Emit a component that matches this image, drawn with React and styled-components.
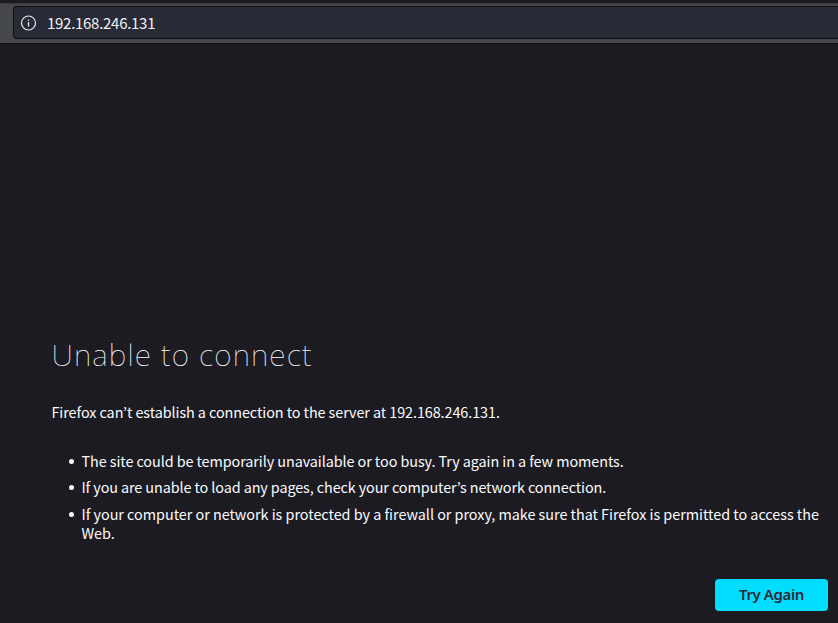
import React from "react";
import styled, { createGlobalStyle } from "styled-components";

const bodyFont = '"Noto Sans CJK KR", "Noto Sans", sans-serif';

const GlobalStyle = createGlobalStyle`
  * { box-sizing: border-box; }
  body { margin: 0; background: #1c1b22; font-family: ${bodyFont}; }
`;

const Page = styled.div`
  height: 623px;
  display: flex;
  flex-direction: column;
  overflow: hidden;
  background: #1c1b22;
  color: #fbfbfe;
`;

const Toolbar = styled.header`
  flex: none;
  height: 44px;
  padding: 3px 0 4px 13px;
  background: #45474b;
  border-top: 3px solid #1b1b20;
  border-bottom: 1px solid #0c0c12;
  box-shadow: inset 0 1px #38393d;
`;

const AddressBar = styled.div`
  height: 33px;
  display: flex;
  align-items: center;
  gap: 10px;
  padding-left: 7px;
  background: #282a36;
  border: 1px solid #0d0e14;
  border-right: 0;
  border-radius: 4px 0 0 4px;
  font-size: 15px;
  letter-spacing: ${(p) => p.$tracking};
  color: #f0f0f2;
`;

const Message = styled.main`
  flex: 1;
  display: flex;
  flex-direction: column;
  padding: 287px 10px 12px 51.5px;
  font-size: 14.4px;
  line-height: 19px;
`;

const Title = styled.h1`
  margin: 0;
  font-family: "Noto Sans", sans-serif;
  font-size: 30px;
  line-height: 48px;
  font-weight: 100;
  white-space: nowrap;
  letter-spacing: ${(p) => p.$tracking};
`;

const Text = styled.p`
  margin: 23px 0 0;
  white-space: nowrap;
  letter-spacing: ${(p) => p.$tracking};
`;

const Hints = styled.ul`
  margin: 30px 0 0;
  padding: 0 0 0 17px;
  list-style: none;
`;

const Hint = styled.li`
  display: flex;
  gap: 8px;
  margin-bottom: ${(p) => p.$gap || "7px"};
  white-space: nowrap;
  letter-spacing: ${(p) => p.$tracking};

  &::before {
    content: "";
    flex: none;
    width: 5px;
    height: 5px;
    margin-top: 8px;
    border-radius: 50%;
    background: currentColor;
  }
`;

const RetryButton = styled.button`
  align-self: flex-end;
  margin-top: auto;
  width: 113px;
  height: 32px;
  padding: 0 0 2px;
  border: 0;
  border-radius: 4px;
  background: #00ddff;
  color: #2b2a33;
  font: 600 15px "Noto Sans", sans-serif;
  letter-spacing: -0.4px;
`;

const InfoIcon = () => (
  <svg width="16" height="16" viewBox="0 0 16 16" fill="none" stroke="#e8e8ec">
    <circle cx="7.5" cy="8" r="7" strokeWidth="1.2" />
    <path d="M7.5 7v4.5M7.5 4.5v1.2" strokeWidth="1.3" />
  </svg>
);

export default function App() {
  return (
    <Page>
      <GlobalStyle />
      <Toolbar>
        <AddressBar $tracking="-0.28px">
          <InfoIcon />
          <span>192.168.246.131</span>
        </AddressBar>
      </Toolbar>
      <Message>
        <Title $tracking="1.13px">Unable to connect</Title>
        <Text $tracking="-0.08px">Firefox can’t establish a connection to the server at 192.168.246.131.</Text>
        <Hints>
          <Hint $tracking="-0.08px">The site could be temporarily unavailable or too busy. Try again in a few moments.</Hint>
          <Hint $tracking="-0.1px" $gap="8px">If you are unable to load any pages, check your computer’s network connection.</Hint>
          <Hint $tracking="-0.03px">
            <span>
              If your computer or network is protected by a firewall or proxy, make sure that Firefox is permitted to access the
              <br />
              Web.
            </span>
          </Hint>
        </Hints>
        <RetryButton>Try Again</RetryButton>
      </Message>
    </Page>
  );
}
